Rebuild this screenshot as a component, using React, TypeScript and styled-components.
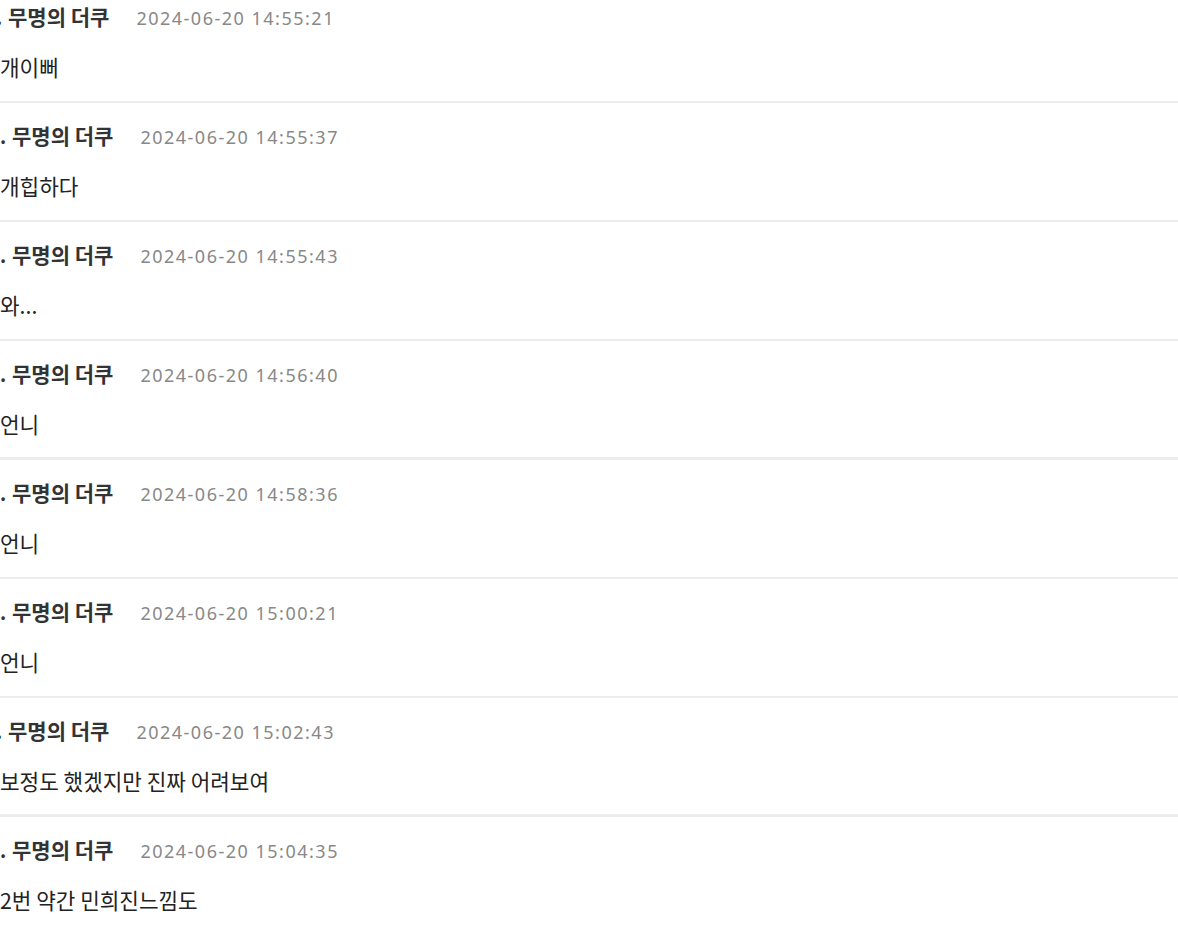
import React from 'react'
import styled, { createGlobalStyle } from 'styled-components'

const GlobalStyle = createGlobalStyle`
  html, body {
    margin: 0;
    padding: 0;
    background: #fff;
    overflow: hidden;
  }
  body {
    font-family: "Noto Sans CJK KR", "Noto Sans", sans-serif;
    color: #222;
  }
`

const List = styled.ul`
  list-style: none;
  margin: -16px 0 0;
  padding: 0;
  width: 1178px;
  overflow: hidden;
`

const Item = styled.li<{ $thick?: boolean }>`
  display: flex;
  flex-direction: column;
  height: ${({ $thick }) => ($thick ? 116 : 117)}px;
  border-bottom: ${({ $thick }) => ($thick ? 3 : 2)}px solid #ececec;
`

const Header = styled.div<{ $shift: number }>`
  display: flex;
  align-items: baseline;
  height: 28px;
  line-height: 28px;
  margin-top: 18px;
  margin-left: ${({ $shift }) => $shift}px;
  white-space: nowrap;
`

const Num = styled.span`
  width: 4px;
  margin-right: 8px;
  font-size: 19px;
  font-weight: 700;
  color: #333;
`

const Name = styled.span`
  font-size: 21px;
  font-weight: 700;
  color: #333;
`

const Date = styled.span`
  margin-left: 27px;
  font-family: "Noto Sans", sans-serif;
  font-size: 18px;
  color: #888;
  letter-spacing: 1.5px;
`

const Body = styled.p`
  margin: 23px 0 0;
  font-size: 21.3px;
  line-height: 28px;
  color: #222;
  white-space: nowrap;
`

type Comment = {
  date: string
  text: string
  shift?: number
  thick?: boolean
}

const comments: Comment[] = [
  { date: '2024-06-20 14:55:21', text: '개이뻐', shift: -4 },
  { date: '2024-06-20 14:55:37', text: '개힙하다' },
  { date: '2024-06-20 14:55:43', text: '와...' },
  { date: '2024-06-20 14:56:40', text: '언니', thick: true },
  { date: '2024-06-20 14:58:36', text: '언니' },
  { date: '2024-06-20 15:00:21', text: '언니' },
  { date: '2024-06-20 15:02:43', text: '보정도 했겠지만 진짜 어려보여', shift: -4, thick: true },
  { date: '2024-06-20 15:04:35', text: '2번 약간 민희진느낌도' },
]

export default function App() {
  return (
    <>
      <GlobalStyle />
      <List>
        {comments.map((c) => (
          <Item key={c.date} $thick={c.thick}>
            <Header $shift={c.shift ?? 0}>
              <Num>.</Num>
              <Name>무명의 더쿠</Name>
              <Date>{c.date}</Date>
            </Header>
            <Body>{c.text}</Body>
          </Item>
        ))}
      </List>
    </>
  )
}
